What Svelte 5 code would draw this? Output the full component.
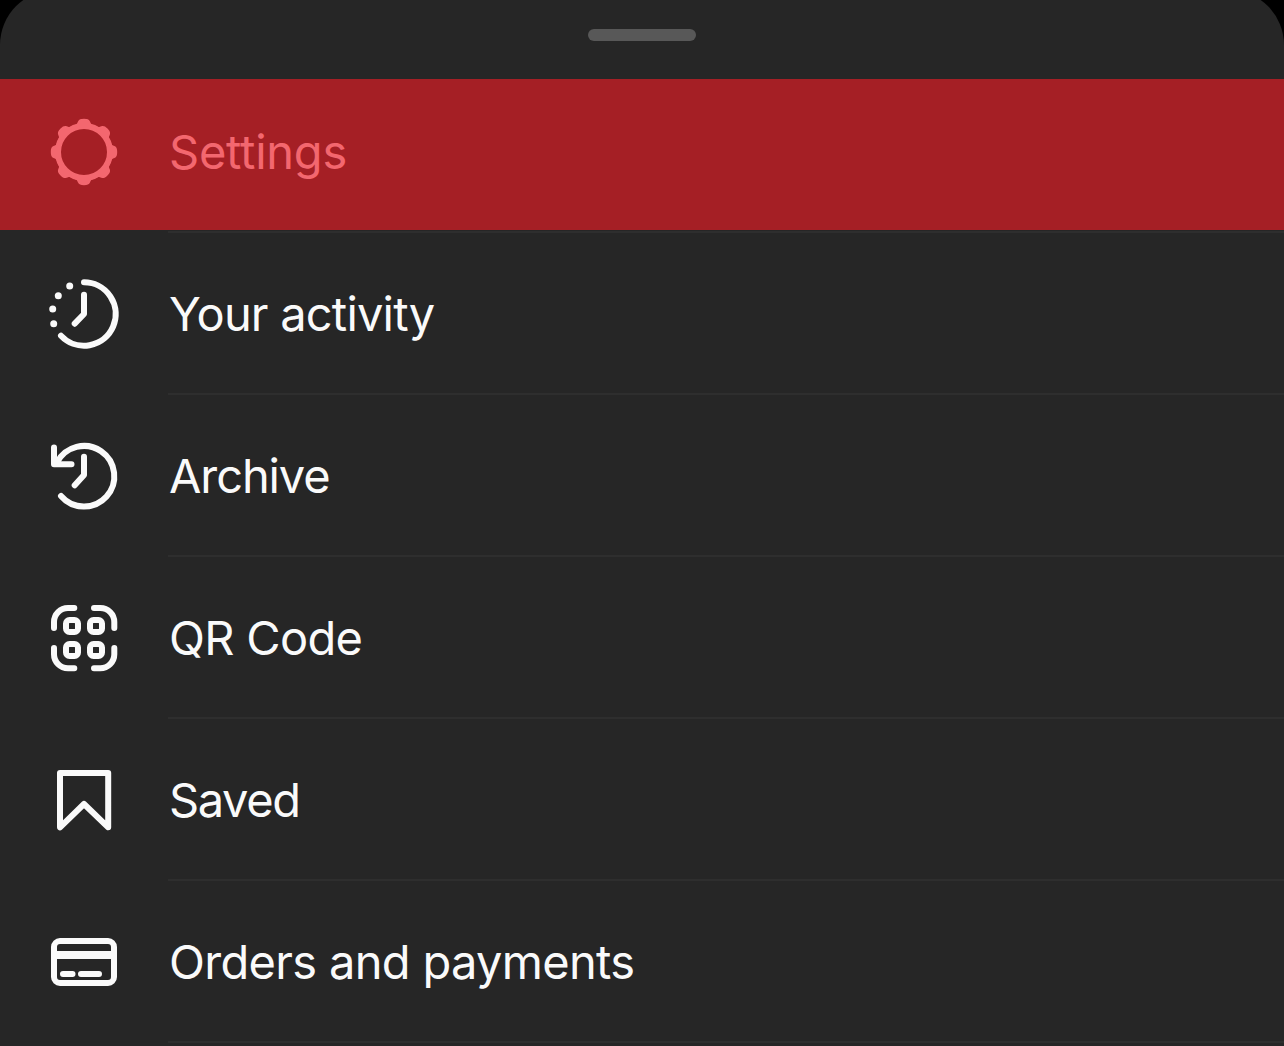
<script lang="ts">
  type Item = {
    id: string;
    label: string;
    spacing: number;
    highlighted?: boolean;
  };

  // spacing is the tracking of the label in px
  const items: Item[] = [
    { id: 'settings', label: 'Settings', spacing: -0.25, highlighted: true },
    { id: 'activity', label: 'Your activity', spacing: -0.8 },
    { id: 'archive', label: 'Archive', spacing: -1.1 },
    { id: 'qr', label: 'QR Code', spacing: -0.7 },
    { id: 'saved', label: 'Saved', spacing: -1.4 },
    { id: 'orders', label: 'Orders and payments', spacing: -0.68 },
  ];

  const teeth = [0, 45, 90, 135, 180, 225, 270, 315];
  const dots = [
    [21.7, 8],
    [10.3, 17.7],
    [4.7, 31],
    [5.7, 45.7],
  ];
</script>

<div class="sheet">
  <div class="sheet-header">
    <div class="handle"></div>
  </div>

  <ul class="menu">
    {#each items as item (item.id)}
      <li class="menu-item" class:highlighted={item.highlighted}>
        <svg class="icon" viewBox="0 0 72 72" aria-hidden="true">
          {#if item.id === 'settings'}
            <circle cx="36" cy="36" r="26" />
            {#each teeth as angle}
              <path
                class="solid"
                transform="rotate({angle} 36 36)"
                d="M25.500 9.300C29.500 8.500 29 7.500 30 5.500C31 3.500 32.500 2.800 36 2.800s5 .7 6 2.700C43 7.500 42.500 8.500 46.500 9.300L42 12H30z"
              />
            {/each}
          {:else if item.id === 'activity'}
            <path d="M36 4.300A31.700 31.700 0 1 1 13 57.800" />
            <path d="M36 16.700V36l-9.300 9.700" />
            {#each dots as [cx, cy]}
              <circle class="solid" {cx} {cy} r="3.5" />
            {/each}
          {:else if item.id === 'archive'}
            <path d="M13 56A30.300 30.300 0 1 0 9 22.500" />
            <path d="M6 7.500V24.300H23.500" />
            <path d="M36 16.700V35l-9.300 10.300" />
          {:else if item.id === 'qr'}
            <path d="M6 26V20A14 14 0 0 1 20 6h6.300" />
            <path d="M46 6h6.300a14 14 0 0 1 14 14v6" />
            <path d="M6 46v6.300a14 14 0 0 0 14 14h6.300" />
            <path d="M46 66.300h6.300a14 14 0 0 0 14-14V46" />
            <rect x="18" y="18" width="12" height="12" rx="3.500" />
            <rect x="42" y="18" width="12" height="12" rx="3.500" />
            <rect x="18" y="42" width="12" height="12" rx="3.500" />
            <rect x="42" y="42" width="12" height="12" rx="3.500" />
          {:else if item.id === 'saved'}
            <path d="M12 9H60.200V63.300L36 40 12 63.300z" />
          {:else if item.id === 'orders'}
            <rect x="6" y="15" width="60" height="42" rx="6" />
            <path class="stripe" d="M6 29H66" />
            <path d="M15 48h9.500M33 48h18" />
          {/if}
        </svg>
        <span class="label" style="letter-spacing: {item.spacing}px">{item.label}</span>
      </li>
    {/each}
  </ul>
</div>

<style>
:global(body) {
  margin: 0;
  background: #000;
  overflow: hidden;
}

.sheet {
  height: 1056px;
  margin-top: -10px;
  box-sizing: border-box;
  overflow: hidden;
  background: #262626;
  border-radius: 55px 55px 0 0;
  font-family: Inter, 'Liberation Sans', sans-serif;
}

.sheet-header {
  display: flex;
  justify-content: center;
  box-sizing: border-box;
  height: 89px;
  padding-top: 39px;
}

.handle {
  width: 108px;
  height: 12px;
  border-radius: 6px;
  background: #585858;
}

.menu {
  list-style: none;
  margin: 0;
  padding: 0;
}

.menu-item {
  display: grid;
  grid-template-columns: 72px 1fr;
  column-gap: 48px;
  align-items: center;
  box-sizing: border-box;
  height: 162px;
  padding-left: 48px;
  color: #fafafa;
  background: linear-gradient(#2e2e2e, #2e2e2e) 168px 100% / 100% 2px no-repeat;
}

.menu-item.highlighted {
  height: 154px;
  padding-bottom: 8px;
  color: #f3676f;
  background:
    linear-gradient(#a51f25, #a51f25) 0 0 / 100% 151px no-repeat,
    linear-gradient(#2e2e2e, #2e2e2e) 168px 100% / 100% 2px no-repeat;
}

.icon {
  width: 72px;
  height: 72px;
  fill: none;
  stroke: currentColor;
  stroke-width: 6;
  stroke-linecap: round;
  stroke-linejoin: round;
}

.icon .solid {
  fill: currentColor;
  stroke: none;
}

.icon .stripe {
  stroke-width: 8;
  stroke-linecap: butt;
}

.label {
  padding-left: 1px;
  font-size: 47px;
  line-height: 60px;
  white-space: nowrap;
}
</style>
